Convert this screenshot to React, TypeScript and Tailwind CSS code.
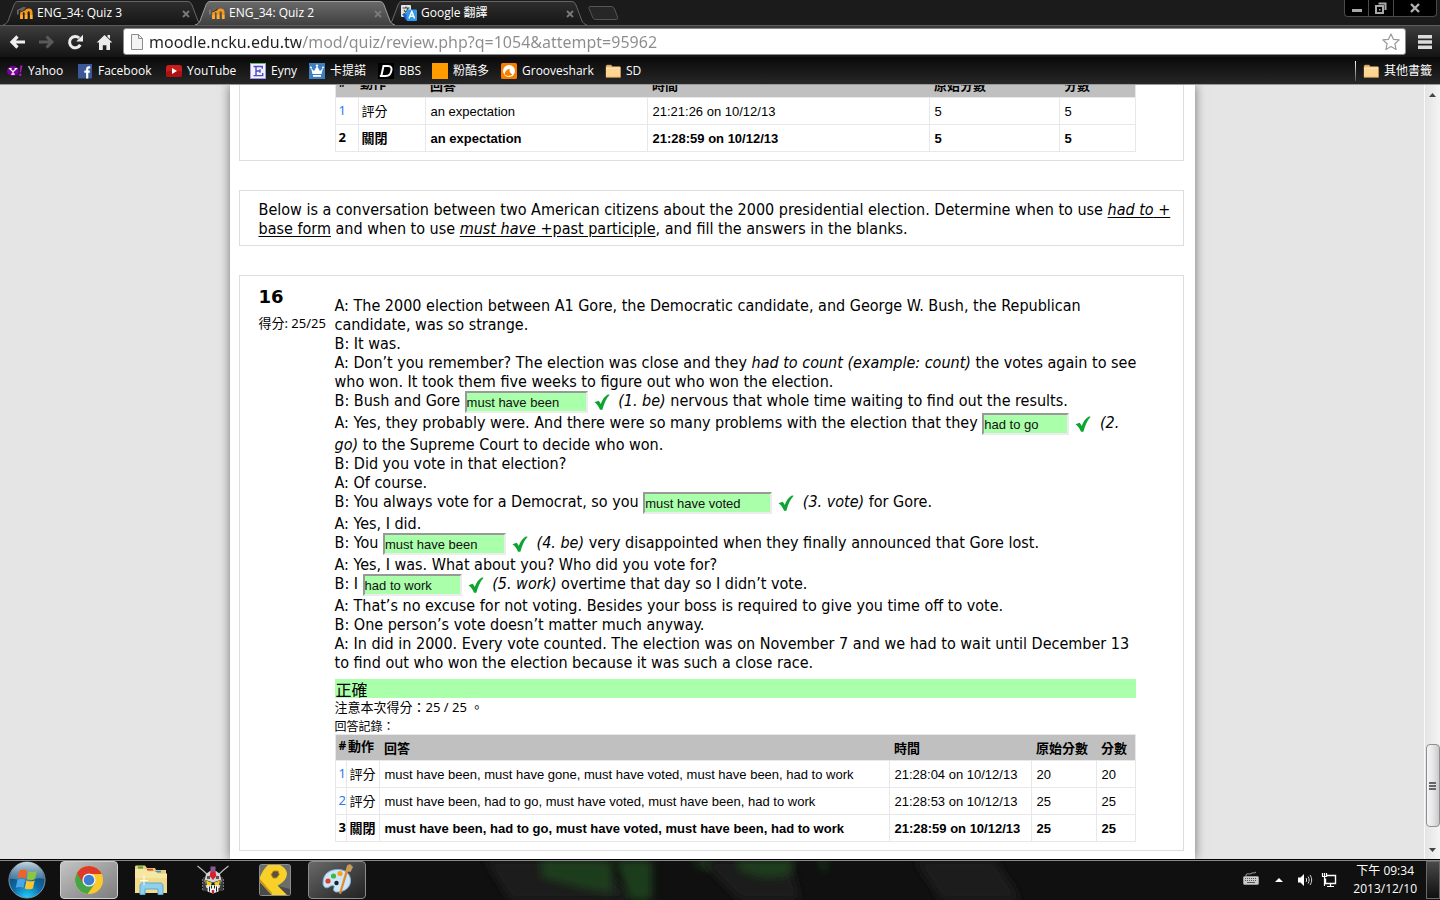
import type { ReactNode } from "react";

/* ---------- small drawings ---------- */

const MoodleIcon = () => (
  <svg viewBox="0 0 16 16" className="size-4 shrink-0" aria-hidden="true">
    <path d="M4.500 14V8.200c0-1.600.9-2.400 2.200-2.400S9 6.600 9 8.200V14M9.200 14V7.600c0-1.700 1-2.700 2.500-2.700s2.500 1 2.500 2.900V14" fill="none" stroke="#f7981d" strokeWidth="2.700" />
    <path d="M4.500 14v-4M9.100 14v-4M14.200 14v-4" stroke="#ffb031" strokeWidth="2.400" />
    <path d="M.5 4.800 6.500 1.800 9.500 2.800 4.500 6z" fill="#6a625c" />
    <path d="M.9 4.800v4.700" stroke="#9a9a9a" strokeWidth="1" />
    <path d="M3.400 5.600v1.900L8.400 5.200V3.400L4.500 6z" fill="#3a3634" />
  </svg>
);

const TranslateIcon = () => (
  <svg viewBox="0 0 16 16" className="size-4 shrink-0" aria-hidden="true">
    <rect x="0" y="0" width="10" height="12" rx="1" fill="#e6e6e6" />
    <path d="M1.500 3h7M5 1.500V3M2.500 9C5 7.500 6.500 6 7 3M3 5c1 2 2 3 4 4" stroke="#444" strokeWidth="1.200" fill="none" />
    <path d="M1 9l4 6h3l-2-6z" fill="#1b63c7" />
    <rect x="5.500" y="4.500" width="10.500" height="11.500" rx="1" fill="#2f9bea" />
    <path d="M8 13.500 10.800 6.500 13.600 13.500M9 11.300h3.600" stroke="#fff" strokeWidth="1.500" fill="none" />
  </svg>
);

const CloseGlyph = () => (
  <svg viewBox="0 0 8 8" className="size-2" aria-hidden="true">
    <path d="M1 1l6 6M7 1L1 7" stroke="#7a7a7a" strokeWidth="1.800" />
  </svg>
);

const FolderIcon = () => (
  <svg viewBox="0 0 16 16" className="size-4 shrink-0" aria-hidden="true">
    <path d="M1 3.500c0-1 .5-1.500 1.500-1.500h3c1 0 1.500.5 1.500 1.500h7.500c.5 0 1 .5 1 1V14H1z" fill="#e8b877" stroke="#a8794a" strokeWidth=".6" />
    <path d="M1 5h14.500v9.300H1z" fill="#ffd592" />
    <path d="M1 5h14.500" stroke="#fff0cc" strokeWidth="1" />
    <path d="M1 14.300h14.500V5" stroke="#b78a55" strokeWidth=".8" fill="none" />
  </svg>
);

const YahooIcon = () => (
  <svg viewBox="0 0 16 16" className="size-4 shrink-0" aria-hidden="true">
    <ellipse cx="6" cy="8" rx="6" ry="5" fill="#7b0099" />
    <path d="M2.500 5.500 6 8.700 9.500 5.500M6 8.500v2.800M4.200 11.200h3.600M1.800 5.500h2.800M7.600 5.500h2.800" stroke="#fff" strokeWidth="1.200" fill="none" />
    <path d="M15.500 2.500 14 9.500h-1.200L13.300 2.500z" fill="#a020c0" />
    <circle cx="13.200" cy="11.700" r="1.300" fill="#a020c0" />
  </svg>
);

const FacebookIcon = () => (
  <svg viewBox="0 0 16 16" className="size-4 shrink-0" aria-hidden="true">
    <rect x="1" y="1" width="14" height="14.500" fill="#3b5998" />
    <path d="M13.200 4.300h-1.300c-1.300 0-1.700.6-1.700 1.900v9.300M7.300 8.700h5.500" stroke="#fff" strokeWidth="2.200" fill="none" />
  </svg>
);

const YouTubeIcon = () => (
  <svg viewBox="0 0 16 16" className="size-4 shrink-0" aria-hidden="true">
    <rect x="0" y="2" width="16" height="12" rx="2.500" fill="#c81e1e" />
    <rect x="0" y="8" width="16" height="6" rx="2.500" fill="#ad1212" />
    <path d="M6 5v6l5-3z" fill="#fff" />
  </svg>
);

const EynyIcon = () => (
  <svg viewBox="0 0 16 16" className="size-4 shrink-0" aria-hidden="true">
    <rect x=".5" y=".5" width="15" height="15" fill="#f2f2ff" stroke="#9a9ae8" />
    <path d="M0 .5h16" stroke="#5fc15f" />
    <path d="M3.500 3.500h8.800v2.300M6 3.500v9M3.500 12.600h9.200v-2.500M6 8h4.300M10 6.300v3.400" stroke="#4a4ac8" strokeWidth="1.400" fill="none" />
  </svg>
);

const CrownIcon = () => (
  <svg viewBox="0 0 16 16" className="size-4 shrink-0" aria-hidden="true">
    <rect width="16" height="16" fill="#3d7fc0" />
    <path d="M2 5l3 3 3-5 3 5 3-3-1.500 6h-9z" fill="#fff" />
    <path d="M4 12h8v1.800H4z" fill="#fff" />
    <circle cx="8" cy="2.600" r="1.200" fill="#fff" />
    <circle cx="2" cy="4.600" r="1" fill="#fff" />
    <circle cx="14" cy="4.600" r="1" fill="#fff" />
  </svg>
);

const BbsIcon = () => (
  <svg viewBox="0 0 16 16" className="size-4 shrink-0" aria-hidden="true">
    <rect width="16" height="16" fill="#000" />
    <path d="M5.500 3H10c3 0 4 1.800 3.400 4.600C12.700 11.200 11 13 7.800 13H3.300zM3.800 13h-2" fill="none" stroke="#fff" strokeWidth="2" />
  </svg>
);

const OrangeIcon = () => (
  <svg viewBox="0 0 16 16" className="size-4 shrink-0" aria-hidden="true">
    <rect width="16" height="16" fill="#ff9c00" />
  </svg>
);

const GroovesharkIcon = () => (
  <svg viewBox="0 0 16 16" className="size-4 shrink-0" aria-hidden="true">
    <rect width="16" height="16" rx="1.500" fill="#f77f00" />
    <circle cx="8" cy="8" r="6" fill="#fff" />
    <path d="M3.500 11.500C4 8 6 6 9 6c-1 1-1 3 2.500 5.500-2 1.800-5.500 2-8 0z" fill="#f77f00" />
  </svg>
);

const Tick = () => (
  <svg viewBox="0 0 16 16" className="ml-1.5 mr-1 mt-[3px] inline-block size-4 align-top" role="img" aria-label="正確">
    <path d="M.5 8.300 4.600 6.700C5.600 7.700 6.200 8.800 6.700 10 8.300 5.800 10.500 2.300 13.800.5l1.900.2C12 4.500 10 9.600 8.400 15.800H6C4.800 12.600 3 10 .5 8.300z" fill="#0ea432" />
  </svg>
);

/* ---------- browser frame ---------- */

type TabProps = { icon: ReactNode; title: string; active?: boolean };

const Tab = ({ icon, title, active }: TabProps) => (
  <div className={active ? "relative z-10 -mr-2 h-6 w-[200px]" : "relative -mr-2 h-6 w-[200px]"}>
    <svg viewBox="0 0 200 24" preserveAspectRatio="none" className="absolute inset-0 h-full w-full" aria-hidden="true">
      <defs>
        <linearGradient id="tabOn" x1="0" y1="0" x2="0" y2="1">
          <stop offset="0" stopColor="#6a6a6a" />
          <stop offset="1" stopColor="#404040" />
        </linearGradient>
        <linearGradient id="tabOff" x1="0" y1="0" x2="0" y2="1">
          <stop offset="0" stopColor="#2e2e2e" />
          <stop offset="1" stopColor="#161616" />
        </linearGradient>
      </defs>
      <path
        d="M0 24C3 23 4 22 5 20L11 4C12 1.500 13 .5 15 .5H184C187 .5 188 1.500 189 4L195 20C196 22 197 23 200 24"
        fill={active ? "url(#tabOn)" : "url(#tabOff)"}
        stroke={active ? "#a0a0a0" : "#666"}
        strokeWidth="1"
      />
    </svg>
    <div className="relative flex h-full items-center pl-3.5 pr-[11px]">
      <button type="button" className="flex min-w-0 flex-1 items-center gap-1 text-left text-[12px] leading-4 text-white">
        {icon}
        <span className="truncate">{title}</span>
      </button>
      <button type="button" aria-label="關閉分頁" className="mt-0.5 flex size-3 items-center justify-center">
        <CloseGlyph />
      </button>
    </div>
  </div>
);

const TabStrip = () => (
  <div className="flex h-[25px] items-start bg-[#1b1b1b]">
    <div className="flex h-full items-end pl-[3px]">
      <Tab icon={<MoodleIcon />} title="ENG_34: Quiz 3" />
      <Tab icon={<MoodleIcon />} title="ENG_34: Quiz 2" active />
      <Tab icon={<TranslateIcon />} title="Google 翻譯" />
    </div>
    <button type="button" aria-label="新分頁" className="ml-2 mt-1.5">
      <svg viewBox="0 0 32 14" className="h-3.5 w-8" aria-hidden="true">
        <path d="M3 .5h21c2 0 3 1 3.500 2.500L30.500 11c.5 1.500 0 2.500-1.500 2.500H9C7 13.500 6 12.500 5.500 11L2 2.500C1.500 1.200 2 .5 3 .5z" fill="#272727" stroke="#555" />
      </svg>
    </button>
    <div className="ml-auto mr-[3px] flex h-[17px] divide-x divide-[#4a4a4a] overflow-hidden rounded-b border border-t-0 border-[#4a4a4a] bg-black">
      <button type="button" aria-label="最小化" className="flex w-6 items-center justify-center">
        <svg viewBox="0 0 10 10" className="size-2.5" aria-hidden="true"><path d="M0 6h10v3H0z" fill="#a8a8a8" /></svg>
      </button>
      <button type="button" aria-label="還原" className="flex w-[25px] items-center justify-center">
        <svg viewBox="0 0 12 12" className="size-3" aria-hidden="true">
          <path d="M3.500 1.500H10.500V8" fill="none" stroke="#a8a8a8" strokeWidth="2" />
          <rect x="1" y="4" width="7" height="7" fill="none" stroke="#a8a8a8" strokeWidth="2" />
          <rect x="4" y="7" width="1.500" height="1.500" fill="#a8a8a8" />
        </svg>
      </button>
      <button type="button" aria-label="關閉" className="flex w-[42px] items-center justify-center">
        <svg viewBox="0 0 10 10" className="size-2.5" aria-hidden="true">
          <path d="M1 1l8 8M9 1L1 9" stroke="#b0b0b0" strokeWidth="2.400" />
        </svg>
      </button>
    </div>
  </div>
);

const Toolbar = () => (
  <div className="flex h-8 items-center border-t border-[#5c5c5c] bg-linear-to-b from-[#3d3d3d] to-[#141414] pl-[9px] pr-2">
    <div className="flex items-center gap-3">
      <button type="button" aria-label="上一頁">
        <svg viewBox="0 0 17 16" className="h-4 w-[17px]" aria-hidden="true">
          <path d="M16 8H3.500M8.500 2.500 3 8l5.500 5.500" fill="none" stroke="#f0f0f0" strokeWidth="3.200" />
        </svg>
      </button>
      <button type="button" aria-label="下一頁">
        <svg viewBox="0 0 17 16" className="h-4 w-[17px]" aria-hidden="true">
          <path d="M1 8H13.500M8.500 2.500 14 8l-5.500 5.500" fill="none" stroke="#5a5a5a" strokeWidth="3" />
        </svg>
      </button>
      <button type="button" aria-label="重新載入">
        <svg viewBox="0 0 17 16" className="h-4 w-[17px]" aria-hidden="true">
          <path d="M13.300 10.800A5.700 5.700 0 1 1 12.200 4" fill="none" stroke="#ececec" strokeWidth="3" />
          <path d="M16 .8V7.500H9.200z" fill="#ececec" />
        </svg>
      </button>
      <button type="button" aria-label="首頁">
        <svg viewBox="0 0 17 16" className="h-4 w-[17px]" aria-hidden="true">
          <path d="M8.500 1 16.300 8.600H14V16h-3.600v-4.800H6.800V16H3V8.600H.7z" fill="#ececec" />
          <path d="M11.500 1h2.500v4l-2.500-2z" fill="#ececec" />
        </svg>
      </button>
    </div>
    <div className="ml-2.5 mr-3 flex h-[27px] flex-1 items-center rounded-[3px] border border-[#8a8a8a] bg-white pl-[7px] pr-1">
      <svg viewBox="0 0 12 16" className="mr-1.5 h-4 w-3" aria-hidden="true">
        <path d="M.5.5h7l4 4v11H.5z" fill="#f4f4f4" stroke="#8c8c8c" />
        <path d="M7.500.5v4h4" fill="none" stroke="#8c8c8c" />
      </svg>
      <input
        type="text"
        aria-label="網址"
        readOnly
        defaultValue="moodle.ncku.edu.tw/mod/quiz/review.php?q=1054&attempt=95962"
        className="h-6 min-w-0 flex-1 bg-[linear-gradient(to_right,#222_152px,#8c8c8c_152px)] bg-clip-text font-['Noto_Sans',sans-serif] text-[16px] leading-6 text-transparent outline-none"
      />
      <button type="button" aria-label="加入書籤">
        <svg viewBox="0 0 20 20" className="size-5" aria-hidden="true">
          <path d="M10 2l2.400 5.300 5.800.6-4.300 3.900 1.200 5.700L10 14.600l-5.100 2.900 1.200-5.700L1.800 7.900l5.800-.6z" fill="#fff" stroke="#999" strokeWidth="1.200" strokeLinejoin="round" />
        </svg>
      </button>
    </div>
    <button type="button" aria-label="選單">
      <svg viewBox="0 0 14 14" className="size-3.5" aria-hidden="true">
        <path d="M0 0h14v3.600H0zM0 5.200h14v3.600H0zM0 10.400h14V14H0z" fill="#dcdcdc" />
      </svg>
    </button>
  </div>
);

const bookmarks: { label: string; icon: ReactNode; width: string }[] = [
  { label: "Yahoo", icon: <YahooIcon />, width: "w-[70px]" },
  { label: "Facebook", icon: <FacebookIcon />, width: "w-[89px]" },
  { label: "YouTube", icon: <YouTubeIcon />, width: "w-[84px]" },
  { label: "Eyny", icon: <EynyIcon />, width: "w-[59px]" },
  { label: "卡提諾", icon: <CrownIcon />, width: "w-[69px]" },
  { label: "BBS", icon: <BbsIcon />, width: "w-[54px]" },
  { label: "粉酷多", icon: <OrangeIcon />, width: "w-[69px]" },
  { label: "Grooveshark", icon: <GroovesharkIcon />, width: "w-[104px]" },
  { label: "SD", icon: <FolderIcon />, width: "w-[40px]" },
];

const BookmarkBar = () => (
  <nav className="flex h-7 items-center border-b border-[#9a9a9a] bg-linear-to-b from-[#0a0a0a] to-[#272727] pl-[7px] pr-2 text-[12px] leading-4 text-white">
    {bookmarks.map((b) => (
      <a key={b.label} href="#" className={`${b.width} flex shrink-0 items-center gap-[5px] whitespace-nowrap`}>
        {b.icon}
        {b.label}
      </a>
    ))}
    <div className="ml-auto flex h-full items-center gap-[7px]">
      <div className="h-5 w-px bg-linear-to-b from-white to-[#555]" />
      <a href="#" className="flex items-center gap-[5px] whitespace-nowrap">
        <FolderIcon />
        其他書籤
      </a>
    </div>
  </nav>
);

/* ---------- quiz page ---------- */

type Attempt = { n: string; action: string; answer: string; time: string; raw: string; grade: string };

const HistoryTable = ({ cols, rows }: { cols: string[]; rows: Attempt[] }) => {
  const head = "pl-[5px] text-left font-bold";
  return (
    <table className="w-full table-fixed border-collapse border border-[#e8e8e8] text-[13px] leading-[18px]">
      <colgroup>
        {cols.map((c, i) => (
          <col key={i} className={c} />
        ))}
      </colgroup>
      <thead>
        <tr className="h-[26px] whitespace-nowrap bg-[#c0c0c0]">
          <th scope="col" className="pb-1 pl-[3px] text-left text-[12px] font-bold">#</th>
          <th scope="col" className="pb-1 pl-0.5 text-left font-bold">動作</th>
          <th scope="col" className={head}>回答</th>
          <th scope="col" className={head}>時間</th>
          <th scope="col" className={head}>原始分數</th>
          <th scope="col" className={head}>分數</th>
        </tr>
      </thead>
      <tbody>
        {rows.map((r, i) => {
          const last = i === rows.length - 1;
          const cell = "border border-[#e8e8e8] pl-[5px] pt-0.5 font-['Liberation_Sans',Arial,sans-serif]";
          return (
            <tr key={r.n} className={last ? "h-[27px] whitespace-nowrap font-bold" : "h-[27px] whitespace-nowrap"}>
              <td className="border border-[#e8e8e8] pb-0.5 pl-[3px]">
                {last ? r.n : <a href="#" className="text-[#2a7af0]">{r.n}</a>}
              </td>
              <td className="border border-[#e8e8e8] pl-[3px]">{r.action}</td>
              <td className={cell}>{r.answer}</td>
              <td className={cell}>{r.time}</td>
              <td className={cell}>{r.raw}</td>
              <td className={cell}>{r.grade}</td>
            </tr>
          );
        })}
      </tbody>
    </table>
  );
};

const previousRows: Attempt[] = [
  { n: "1", action: "評分", answer: "an expectation", time: "21:21:26 on 10/12/13", raw: "5", grade: "5" },
  { n: "2", action: "關閉", answer: "an expectation", time: "21:28:59 on 10/12/13", raw: "5", grade: "5" },
];

const rows16: Attempt[] = [
  { n: "1", action: "評分", answer: "must have been, must have gone, must have voted, must have been, had to work", time: "21:28:04 on 10/12/13", raw: "20", grade: "20" },
  { n: "2", action: "評分", answer: "must have been, had to go, must have voted, must have been, had to work", time: "21:28:53 on 10/12/13", raw: "25", grade: "25" },
  { n: "3", action: "關閉", answer: "must have been, had to go, must have voted, must have been, had to work", time: "21:28:59 on 10/12/13", raw: "25", grade: "25" },
];

const Blank = ({ value, width, label }: { value: string; width: string; label: string }) => (
  <>
    <input
      type="text"
      aria-label={label}
      readOnly
      defaultValue={value}
      className={`${width} inline-block h-[22px] border-2 border-b-[#ececec] border-l-[#999] border-r-[#ececec] border-t-[#999] bg-[#aaffaa] align-top font-['Liberation_Sans',Arial,sans-serif] text-[13px] leading-4 text-[#111]`}
    />
    <Tick />
  </>
);

const Conversation = () => (
  <div className="whitespace-nowrap font-['DejaVu_Sans_Condensed',sans-serif] text-[16px] leading-[19px]">
    <p>
      A: The 2000 election between A1 Gore, the Democratic candidate, and George W. Bush, the Republican
      <br />
      candidate, was so strange.
    </p>
    <p>B: It was.</p>
    <p>
      A: Don’t you remember? The election was close and they <i>had to count (example: count)</i> the votes again to see
      <br />
      who won. It took them five weeks to figure out who won the election.
    </p>
    <p>
      B: Bush and Gore <Blank value="must have been" width="w-[123px]" label="1" /> <i>(1. be)</i> nervous that whole time
      waiting to find out the results.
    </p>
    <p>
      A: Yes, they probably were. And there were so many problems with the election that they{" "}
      <Blank value="had to go" width="w-[87px]" label="2" /> <i>(2.</i>
      <br />
      <i>go)</i> to the Supreme Court to decide who won.
    </p>
    <p>B: Did you vote in that election?</p>
    <p>A: Of course.</p>
    <p>
      B: You always vote for a Democrat, so you <Blank value="must have voted" width="w-[129px]" label="3" />{" "}
      <i>(3. vote)</i> for Gore.
    </p>
    <p>A: Yes, I did.</p>
    <p>
      B: You <Blank value="must have been" width="w-[123px]" label="4" /> <i>(4. be)</i> very disappointed when they
      finally announced that Gore lost.
    </p>
    <p>A: Yes, I was. What about you? Who did you vote for?</p>
    <p>
      B: I <Blank value="had to work" width="w-[99px]" label="5" /> <i>(5. work)</i> overtime that day so I didn’t vote.
    </p>
    <p>A: That’s no excuse for not voting. Besides your boss is required to give you time off to vote.</p>
    <p>B: One person’s vote doesn’t matter much anyway.</p>
    <p>
      A: In did in 2000. Every vote counted. The election was on November 7 and we had to wait until December 13
      <br />
      to find out who won the election because it was such a close race.
    </p>
  </div>
);

const QuizPage = () => (
  <main className="mx-auto flex w-full max-w-[965px] flex-col justify-end gap-[29px] bg-white pb-2 pl-[9px] pr-[11px] font-['Noto_Sans','Noto_Sans_CJK_TC',sans-serif] text-black shadow-[0_0_10px_rgba(0,0,0,0.5)]">
    <section className="border border-[#ddd] pb-2 pl-[95px] pr-[47px] pt-5">
      <HistoryTable
        cols={["w-[23px]", "w-[67px]", "w-[222px]", "w-[282px]", "w-[130px]", "w-[76px]"]}
        rows={previousRows}
      />
    </section>

    <section className="whitespace-nowrap border border-[#ddd] px-[19px] pb-[7px] pt-[9px] font-['DejaVu_Sans_Condensed',sans-serif] text-[16px] leading-[19px]">
      Below is a conversation between two American citizens about the 2000 presidential election. Determine when to use{" "}
      <u className="underline-offset-2"><i>had to</i> +</u>
      <br />
      <u className="underline-offset-2">base form</u> and when to use{" "}
      <u className="underline-offset-2"><i>must have</i> +past participle</u>, and fill the answers in the blanks.
    </section>

    <section className="flex border border-[#ddd] pb-2 pl-[19px] pr-[47px] pt-5">
      <div className="-mt-3 w-[76px] shrink-0 whitespace-nowrap">
        <h2 className="font-['DejaVu_Sans',sans-serif] text-[18px] font-bold leading-[26px]">16</h2>
        <p className="mt-[3px] text-[13px] leading-5">得分: 25/25</p>
      </div>
      <div className="min-w-0 flex-1">
        <Conversation />
        <div className="mt-[7px] h-[19px] bg-[#aaffaa] pl-px text-[16px] leading-[22px]">正確</div>
        <p className="text-[13px] leading-[18px]">注意本次得分：25 / 25 。</p>
        <p className="pt-1 text-[12px] leading-[14px]">回答記錄：</p>
        <HistoryTable
          cols={["w-[11px]", "w-[33px]", "w-[510px]", "w-[142px]", "w-[65px]", "w-[39px]"]}
          rows={rows16}
        />
      </div>
    </section>
  </main>
);

const Scrollbar = () => (
  <div className="flex w-4 shrink-0 flex-col items-center border-l border-[#fafafa] bg-linear-to-r from-[#e4e4e4] to-[#f4f4f4]">
    <button type="button" aria-label="向上捲動" className="flex h-5 w-full items-center justify-center">
      <svg viewBox="0 0 7 4" className="h-1 w-[7px]" aria-hidden="true"><path d="M3.500 0 7 4H0z" fill="#444" /></svg>
    </button>
    <div className="flex-1" />
    <div className="flex h-[83px] w-3.5 flex-col items-center justify-center gap-px rounded-sm border border-[#8f8f8f] bg-linear-to-r from-[#f5f5f5] via-[#e6e6e8] to-[#c9c9cd]">
      <div className="h-0.5 w-[7px] bg-[#666]" />
      <div className="h-0.5 w-[7px] bg-[#666]" />
      <div className="h-0.5 w-[7px] bg-[#666]" />
    </div>
    <div className="h-3.5" />
    <button type="button" aria-label="向下捲動" className="flex h-[18px] w-full items-center justify-center">
      <svg viewBox="0 0 7 4" className="h-1 w-[7px]" aria-hidden="true"><path d="M0 0h7L3.500 4z" fill="#444" /></svg>
    </button>
  </div>
);

/* ---------- taskbar ---------- */

const StartOrb = () => (
  <svg viewBox="0 0 38 38" className="size-[38px]" aria-hidden="true">
    <defs>
      <radialGradient id="orb" cx=".5" cy="1" r=".95">
        <stop offset="0" stopColor="#1fd3ff" />
        <stop offset=".45" stopColor="#0f6ba8" />
        <stop offset="1" stopColor="#123a5c" />
      </radialGradient>
      <linearGradient id="orbShine" x1="0" y1="0" x2="0" y2="1">
        <stop offset="0" stopColor="#dbe8f0" stopOpacity=".9" />
        <stop offset="1" stopColor="#7fa6bf" stopOpacity=".35" />
      </linearGradient>
    </defs>
    <circle cx="19" cy="19" r="18" fill="url(#orb)" stroke="#7d99ab" strokeWidth="1" />
    <path d="M2 18a17 17 0 0 1 34 0c-8-3-12 3-18 3S8 17 2 18z" fill="url(#orbShine)" />
    <path d="M11.500 9.500c3-1.500 5.500-1 7.500 0l-1.500 8c-2.500-1.200-5-1.200-7.800 0z" fill="#f0622a" />
    <path d="M20.200 10.300c2.800 1.200 5.500 1 8.600-.3l-1.800 8c-2.800 1.200-5.500 1.200-8.300 0z" fill="#8dc641" />
    <path d="M9.400 18.800c2.800-1.200 5.300-1.200 7.800 0l-1.700 8c-2.300-1.200-5-1.200-7.700 0z" fill="#4aa6e8" />
    <path d="M18.400 19.400c2.800 1.200 5.500 1.200 8.300 0l-1.800 8c-2.800 1.200-5.500 1.200-8.200 0z" fill="#fdc52c" />
  </svg>
);

const ChromeIcon = () => (
  <svg viewBox="0 0 32 32" className="size-8" aria-hidden="true">
    <circle cx="16" cy="16" r="14" fill="#fcc92b" />
    <path d="M16 16 3.900 9A14 14 0 0 0 14.500 29.900L22 19.500z" fill="#46a546" />
    <path d="M3.900 9A14 14 0 0 1 28.700 10H16L9.500 18.500z" fill="#dd3a2c" />
    <circle cx="16" cy="16" r="6.600" fill="#f4f4f4" />
    <circle cx="16" cy="16" r="5.300" fill="#3f7fd0" />
  </svg>
);

const ExplorerIcon = () => (
  <svg viewBox="0 0 32 32" className="size-8" aria-hidden="true">
    <path d="M0 3c0-1 .5-1.500 1.500-1.500H10L12 4h8l1 2h10v22H0z" fill="#e8cf7c" />
    <path d="M3 2.500h5v2H3z" fill="#3aa93a" />
    <path d="M12 4.800h6v1.700h-6z" fill="#d94a36" />
    <path d="M20 6.800h6v1.700h-6z" fill="#3b8de0" />
    <path d="M0 5h11l2 2.500h8l1.500 2H32V29H0z" fill="#f6e7a4" />
    <path d="M0 14h32v15H0z" fill="#f1dc8c" />
    <path d="M5 30.500V22c0-2 1-3 3-3h17c2 0 3 1 3 3v8.500h-5V25H10v5.500z" fill="#8fd0ee" stroke="#5ba9d2" />
    <path d="M9 12v9M5 16.500h8" stroke="#fff" strokeWidth="1" />
  </svg>
);

const RobotIcon = () => (
  <svg viewBox="0 0 32 32" className="size-8" aria-hidden="true">
    <path d="M.5 2 6 6.500 13 13M31.500 2 26 6.500 19 13" stroke="#b8b8b8" strokeWidth="1.200" fill="none" />
    <path d="M6 13h4v14H6zM22 13h4v14h-4z" fill="#3c3c3c" />
    <path d="M5.500 15v11M26.500 15v11" stroke="#777" strokeDasharray="2 1" />
    <path d="M9 10l4-3h6l4 3 1.500 7-2 7h-13l-2-7z" fill="#d4d4d4" />
    <path d="M10 12h3v3h-3zM19 12h3v3h-3z" fill="#555" />
    <path d="M13.500 2.500h5V8h-5z" fill="#8a5a92" />
    <path d="M13.500 7.500h5l.8 4.500-3.300 4-3.300-4z" fill="#d6202f" />
    <path d="M8.500 16 16 18.500 23.500 16v5h-15z" fill="#191919" />
    <path d="M9 16.500l6 2.300-1 2.200H9.800zM23 16.500l-6 2.300 1 2.200h4.200z" fill="#f2cf1d" />
    <path d="M10.500 21.500h11v6L16 29.500l-5.500-2z" fill="#f3f3f3" />
    <path d="M12.500 22.500v5M19.500 22.500v5M14.500 21.500v3M17.500 21.500v3" stroke="#222" strokeWidth="1" />
    <path d="M14.800 26h2.400v3h-2.400z" fill="#d6202f" />
  </svg>
);

const YellowIcon = () => (
  <svg viewBox="0 0 32 32" className="size-8" aria-hidden="true">
    <rect x=".5" y=".5" width="31" height="31" rx="2" fill="#6c6c6c" stroke="#8d8d8d" />
    <path d="M1 18v13h11z" fill="#4a4a4a" />
    <path d="M19 22 31 25v6h-5z" fill="#4a4a4a" />
    <path d="M9 1h12c4 2 7 5 7 9-.5 5-4 9-9.500 11.500L28 31H13L1 18v-5C3 8 5.500 4 9 1z" fill="#f8d02a" />
    <path d="M1 15 13 29v2L1 18z" fill="#c99510" />
    <path d="M14.500 7h4.500l1.200 3.500L17.500 14H14l-1.800-3.500z" fill="#5c5138" stroke="#b98a14" strokeWidth="1" />
  </svg>
);

const PaintIcon = () => (
  <svg viewBox="0 0 32 32" className="size-8" aria-hidden="true">
    <path d="M2 19C2 10 8 5.500 17 5.500c8 0 13 5 12.500 12C29 24 23 28 16 28c-3 0-4-2-3-4.500S11 21 8 23s-6 0-6-4z" fill="#cfe6f6" stroke="#7fb2d6" />
    <circle cx="12.500" cy="12" r="2.600" fill="#42b649" />
    <circle cx="7" cy="17" r="2.600" fill="#d8412f" />
    <circle cx="19" cy="9.500" r="2.600" fill="#f6a21c" />
    <circle cx="15.500" cy="19" r="2.200" fill="#123" />
    <path d="M27.500 6 20 30l-2-.5L25 5.500z" fill="#e28a2e" />
    <path d="M24.500 7 26 1.500l3-1.500 3 3-2.500 5z" fill="#c99a5e" />
  </svg>
);

const apps: { name: string; icon: ReactNode; look: string }[] = [
  { name: "Google Chrome", icon: <ChromeIcon />, look: "rounded-sm border border-[#d0d0d0] bg-linear-to-br from-[#c4c4c4] to-[#7d7d7d]" },
  { name: "檔案總管", icon: <ExplorerIcon />, look: "" },
  { name: "Gundam", icon: <RobotIcon />, look: "" },
  { name: "播放器", icon: <YellowIcon />, look: "" },
  { name: "小畫家", icon: <PaintIcon />, look: "rounded-sm border border-[#8c8c8c] bg-linear-to-br from-[#6a6a6a] to-[#222222]" },
];

const Taskbar = () => (
  <footer className="relative flex h-[41px] shrink-0 items-center overflow-hidden border-t border-black bg-[#101010]">
    <svg viewBox="0 0 1440 40" preserveAspectRatio="none" className="absolute inset-0 h-full w-full" aria-hidden="true">
      <defs>
        <filter id="soft"><feGaussianBlur stdDeviation="4" /></filter>
      </defs>
      <path d="M485 0h110l40 40H510zM700 0h90l10 40h-60zM915 0h80l26 40h-80z" fill="#1e1e1e" filter="url(#soft)" />
      <path d="M540 0h72v34l-30-6-40-10zM616 0h36v40h-22zM735 0h60l-6 16-24 2-24-6zM690 0h18l2 12zM818 0h8v14z" fill="#1f3c1d" filter="url(#soft)" />
      <path d="M0 .5h1440" stroke="#8a8a8a" />
    </svg>
    <button type="button" aria-label="開始" className="relative ml-2">
      <StartOrb />
    </button>
    <div className="relative ml-3.5 flex items-center gap-1">
      {apps.map((a) => (
        <button key={a.name} type="button" aria-label={a.name} className={`${a.look} flex h-[38px] w-[58px] items-center justify-center`}>
          {a.icon}
        </button>
      ))}
    </div>
    <div className="relative ml-auto flex h-full items-center">
      <svg viewBox="0 0 16 16" className="mb-1 mr-4 size-4" aria-hidden="true">
        <rect x=".5" y="6.500" width="15" height="8" rx="1" fill="#ccc" stroke="#999" />
        <path d="M2 8.500h12M2 10.500h12" stroke="#555" strokeDasharray="1 1" />
        <path d="M4 12.500h8" stroke="#555" />
        <path d="M3 6C3 2 6 5 8 3.500S11 4 13 2" fill="none" stroke="#aaa" />
      </svg>
      <svg viewBox="0 0 8 4" className="mr-3.5 h-1 w-2" aria-hidden="true"><path d="M4 0 8 4H0z" fill="#fff" /></svg>
      <svg viewBox="0 0 16 16" className="mr-2 size-4" aria-hidden="true">
        <path d="M1 5.500h2.500L7 2v12L3.500 10.500H1z" fill="#fff" />
        <path d="M9 6c.8 1.300.8 2.700 0 4M11 4.500c1.500 2.200 1.500 4.800 0 7M13 3c2.200 3 2.200 7 0 10" fill="none" stroke="#ddd" strokeWidth="1" />
      </svg>
      <svg viewBox="0 0 16 16" className="mr-4 size-4" aria-hidden="true">
        <path d="M5.500 3.500h9v8H4.500v-5" fill="none" stroke="#fff" strokeWidth="1.400" />
        <path d="M1.500 1v3.500h4V1M3.500 1v3M3.500 4.500v9.500M6 14.500h7M9.500 12v2" fill="none" stroke="#fff" strokeWidth="1.200" />
      </svg>
      <div className="mr-[9px] text-center text-[12px] leading-[18px] text-white">
        <div>下午 09:34</div>
        <div>2013/12/10</div>
      </div>
      <button type="button" aria-label="顯示桌面" className="h-[38px] w-3.5 border border-[#6a6a6a] bg-linear-to-b from-[#4a4a4a] to-[#101010]" />
    </div>
  </footer>
);

export default function App() {
  return (
    <div className="flex h-screen flex-col overflow-hidden bg-[#1b1b1b] font-['Open_Sans','Noto_Sans_CJK_TC',sans-serif]">
      <header className="shrink-0">
        <TabStrip />
        <Toolbar />
        <BookmarkBar />
      </header>
      <div className="flex min-h-0 flex-1 overflow-hidden bg-[#e5e5e5]">
        <div className="flex min-w-0 flex-1 overflow-hidden">
          <QuizPage />
        </div>
        <Scrollbar />
      </div>
      <Taskbar />
    </div>
  );
}
